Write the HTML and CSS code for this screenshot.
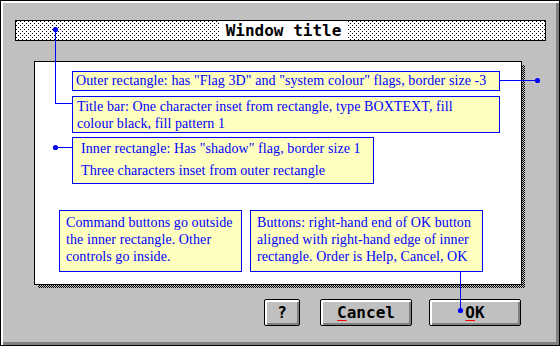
FILE: index.html
```html
<!DOCTYPE html>
<html>
<head>
<meta charset="utf-8">
<link rel="stylesheet" href="styles.css">
</head>
<body>
<div class="window">
  <div class="titlebar"><span class="title">Window title</span></div>
  <div class="inner">
    <div class="note note-outer">Outer rectangle: has "Flag 3D" and "system colour" flags, border size -3</div>
    <div class="note note-title">Title bar: One character inset from rectangle, type BOXTEXT, fill<br>colour black, fill pattern 1</div>
    <div class="note note-inner">
      <div>Inner rectangle: Has "shadow" flag, border size 1</div>
      <div>Three characters inset from outer rectangle</div>
    </div>
    <div class="note-row">
      <div class="note note-cmd">Command buttons go outside<br>the inner rectangle. Other<br>controls go inside.</div>
      <div class="note note-btn">Buttons: right-hand end of OK button<br>aligned with right-hand edge of inner<br>rectangle. Order is Help, Cancel, OK</div>
    </div>
  </div>
  <div class="buttons">
    <div class="btn btn-help">?</div>
    <div class="btn btn-cancel"><span class="acc">C</span>ancel</div>
    <div class="btn btn-ok"><span class="acc">O</span>K</div>
  </div>
  <svg class="connectors" width="560" height="346" viewBox="0 0 560 346">
    <g fill="#0000ff" shape-rendering="crispEdges">
      <rect x="55" y="29" width="1" height="75"/>
      <rect x="55" y="103" width="17" height="1"/>
      <rect x="55" y="147" width="17" height="1"/>
      <rect x="499" y="80" width="38" height="1"/>
      <rect x="460" y="271" width="1" height="40"/>
    </g>
    <g fill="#0000ff">
      <circle cx="55.5" cy="29.5" r="2.6"/>
      <circle cx="55.5" cy="147.5" r="2.6"/>
      <circle cx="537.5" cy="80.5" r="2.6"/>
      <circle cx="460.5" cy="310.5" r="2.6"/>
    </g>
  </svg>
</div>
</body>
</html>
```

FILE: styles.css
```css
html, body {
  margin: 0;
  padding: 0;
  background: #c0c0c0;
}

.window {
  position: relative;
  z-index: 0;
  box-sizing: border-box;
  width: 560px;
  height: 346px;
  border: 1px solid #000;
  background: #c0c0c0;
  box-shadow: inset 2px 2px 0 #fff, inset -3px -3px 0 #808080;
  overflow: hidden;
}

.titlebar {
  box-sizing: border-box;
  width: 531px;
  height: 21px;
  margin: 19px 0 0 14px;
  border: 1px solid #000;
  display: flex;
  justify-content: center;
  align-items: stretch;
  background:
    conic-gradient(at 1px 1px, transparent 270deg, #000 0) 0 0 / 4px 4px,
    conic-gradient(at 1px 1px, transparent 270deg, #000 0) 2px 2px / 4px 4px,
    #fff;
}

.title {
  background: #fff;
  padding: 0 7px;
  margin-left: 6px;
  font-family: "DejaVu Sans Mono", "Liberation Mono", monospace;
  font-weight: bold;
  font-size: 16px;
  line-height: 19px;
  color: #000;
}

.inner {
  position: relative;
  box-sizing: border-box;
  width: 488px;
  height: 224px;
  margin: 20px 0 0 33px;
  border: 1px solid #000;
  background: #fff;
  padding-top: 9px;
}

.inner::after {
  content: "";
  position: absolute;
  top: 3px;
  left: 3px;
  right: -4px;
  bottom: -4px;
  z-index: -1;
  background: repeating-conic-gradient(#000 0 25%, #c0c0c0 0 50%) 0 0 / 2px 2px;
}

.note {
  box-sizing: border-box;
  border: 1px solid #0000ff;
  background: #ffffc0;
  color: #0000ff;
  font-family: "Liberation Serif", "Times New Roman", serif;
  font-size: 14px;
  letter-spacing: 0.08px;
}

.note-outer {
  width: 428px;
  height: 20px;
  margin-left: 37px;
  padding: 0 3px;
  line-height: 18px;
  white-space: nowrap;
}

.note-title {
  width: 428px;
  height: 37px;
  margin: 5px 0 0 37px;
  padding: 1px 4px 0;
  line-height: 17px;
  white-space: nowrap;
}

.note-inner {
  width: 302px;
  height: 47px;
  margin: 4px 0 0 37px;
  padding: 0 8px;
  line-height: 22px;
  white-space: nowrap;
}

.note-row {
  display: flex;
  gap: 8px;
  margin: 26px 0 0 24px;
}

.note-cmd,
.note-btn {
  height: 62px;
  padding: 3px 6px 0;
  line-height: 17px;
  white-space: nowrap;
}

.note-cmd {
  width: 183px;
}

.note-btn {
  width: 233px;
}

.buttons {
  display: flex;
  margin: 14px 0 0 263px;
}

.btn {
  box-sizing: border-box;
  height: 27px;
  border: 1px solid #000;
  border-radius: 2px;
  background: #c0c0c0;
  box-shadow: inset 2px 2px 0 #fff, inset -2px -2px 0 #808080;
  display: flex;
  align-items: center;
  justify-content: center;
  font-family: "DejaVu Sans Mono", "Liberation Mono", monospace;
  font-weight: bold;
  font-size: 16px;
  line-height: 18px;
  color: #000;
}

.btn-help {
  width: 36px;
}

.btn-cancel {
  width: 92px;
  margin-left: 20px;
}

.btn-ok {
  width: 92px;
  margin-left: 17px;
}

.acc {
  text-decoration: underline;
  text-decoration-color: #ff0000;
  text-decoration-thickness: 1px;
  text-underline-offset: 2px;
}

.connectors {
  position: absolute;
  top: -1px;
  left: -1px;
  pointer-events: none;
}
```
